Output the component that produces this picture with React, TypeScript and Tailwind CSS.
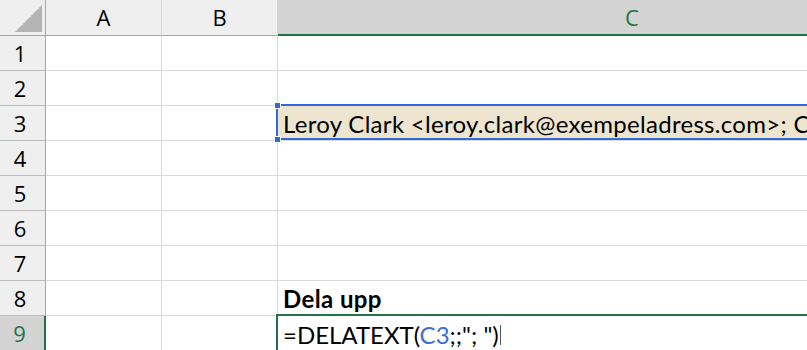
import React from "react";

const rows = [1, 2, 3, 4, 5, 6, 7, 8, 9];

const headFont = { fontFamily: '"Open Sans", "Noto Sans", sans-serif' };
const cellFont = { fontFamily: 'Lato, "Liberation Sans", sans-serif' };

const Handle: React.FC<{ className: string }> = ({ className }) => (
  <div
    className={`absolute w-[7px] h-[7px] bg-[#2f6bd0] border border-white z-20 ${className}`}
  />
);

const CellC: React.FC<{ row: number }> = ({ row }) => {
  if (row === 3) {
    return (
      <div className="relative bg-[#ede5cf] border-b border-[#dadada] flex items-center pl-[5px] pt-[2px] text-[24px] tracking-[0.3px] text-black whitespace-nowrap">
        <div className="absolute -top-[2px] -left-[2px] right-0 bottom-0 border-2 border-[#2f6bd0] z-10" />
        <Handle className="-top-[4px] -left-[4px]" />
        <Handle className="-bottom-[3px] -left-[4px]" />
        <span style={cellFont}>
          Leroy Clark &lt;leroy.clark@exempeladress.com&gt;; Chris Yuen &lt;chris.yuen@exempeladress.com&gt;
        </span>
      </div>
    );
  }
  if (row === 8) {
    return (
      <div className="border-b border-[#dadada] flex items-center pl-[5px] pt-[2px] text-[24px] tracking-[0.4px] font-bold text-black whitespace-nowrap">
        <span style={cellFont}>Dela upp</span>
      </div>
    );
  }
  if (row === 9) {
    return (
      <div className="relative flex items-center pl-[5px] pt-[2px] text-[24px] text-black whitespace-nowrap">
        <div className="absolute -top-[2px] -left-[2px] right-0 -bottom-[4px] border-2 border-[#217346]" />
        <span style={cellFont}>
          =DELATEXT(<span className="text-[#3a6fcf]">C3</span>;;"; ")
        </span>
        <span className="w-px h-[20px] bg-[#555] ml-[1px]" />
      </div>
    );
  }
  return <div className="border-b border-[#dadada]" />;
};

export default function App() {
  return (
    <div className="w-[807px] h-[350px] overflow-hidden bg-white">
      <div className="grid grid-cols-[46px_116px_116px_708px] grid-rows-[36px_repeat(9,35px)] w-[986px]">
        {/* corner */}
        <div className="relative bg-[#efefef] border-r border-b border-[#a6a6a6]">
          <svg className="absolute left-0 top-0" width="45" height="35">
            <polygon points="15,32 42,32 42,5" fill="#b4b4b4" />
          </svg>
        </div>
        {/* column headers */}
        <div
          className="bg-[#efefef] border-r border-[#d5d5d5] border-b border-b-[#a6a6a6] flex items-center justify-center text-[22px] text-black"
          style={headFont}
        >
          A
        </div>
        <div
          className="bg-[#efefef] border-r border-[#d5d5d5] border-b border-b-[#a6a6a6] flex items-center justify-center text-[22px] text-black"
          style={headFont}
        >
          B
        </div>
        <div
          className="bg-[#d3d3d3] border-b-2 border-[#217346] flex items-center justify-center text-[22px] text-[#217346]"
          style={headFont}
        >
          C
        </div>

        {rows.map((r) => (
          <React.Fragment key={r}>
            <div
              className={
                r === 9
                  ? "bg-[#d3d3d3] border-r-2 border-[#217346] flex items-center justify-center pr-[5px] text-[22px] text-[#217346]"
                  : "bg-[#efefef] border-r border-b border-r-[#a6a6a6] border-b-[#bdbdbd] flex items-center justify-center pr-[5px] text-[22px] text-black"
              }
              style={headFont}
            >
              {r}
            </div>
            <div className="border-r border-b border-[#dadada]" />
            <div className="border-r border-b border-[#dadada]" />
            <CellC row={r} />
          </React.Fragment>
        ))}
      </div>
    </div>
  );
}
